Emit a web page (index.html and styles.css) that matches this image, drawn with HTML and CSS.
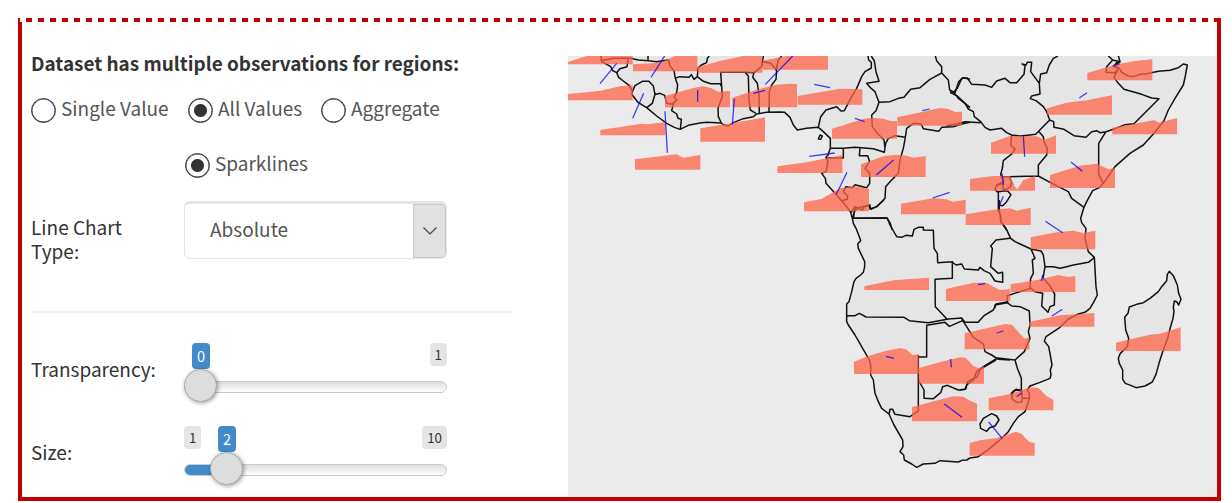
FILE: index.html
```html
<!DOCTYPE html>
<html lang="en">
<head>
<meta charset="utf-8">
<title>Map settings</title>
<link rel="stylesheet" href="styles.css">
</head>
<body>
<main class="frame">
  <div class="frame-top"></div>
  <div class="frame-body">
    <section class="controls">
      <h1 class="title">Dataset has multiple observations for regions:</h1>
      <div class="radios">
        <label class="radio single"><span class="dot"></span><span class="name">Single Value</span></label>
        <label class="radio all"><span class="dot on"></span><span class="name">All Values</span></label>
        <label class="radio agg"><span class="dot"></span><span class="name">Aggregate</span></label>
      </div>
      <div class="radios second">
        <label class="radio"><span class="dot on"></span><span class="name">Sparklines</span></label>
      </div>
      <div class="row select-row">
        <div class="label">Line Chart<br>Type:</div>
        <div class="select"><span class="value">Absolute</span><span class="arrow"><svg width="16" height="10" viewBox="0 0 16 10"><path d="M1.5 1.5 8 8l6.500-6.500" fill="none" stroke="#444" stroke-width="1.200"/></svg></span></div>
      </div>
      <hr class="rule">
      <div class="row slider-row">
        <div class="label">Transparency:</div>
        <div class="slider zero"><div class="track"><div class="fill"></div></div><span class="tag max">1</span><span class="tag current">0</span><span class="knob"></span></div>
      </div>
      <div class="row slider-row size">
        <div class="label">Size:</div>
        <div class="slider two"><div class="track"><div class="fill"></div></div><span class="tag min">1</span><span class="tag max">10</span><span class="tag current">2</span><span class="knob"></span></div>
      </div>
    </section>
    <svg class="map" viewBox="24 48 1947 1323" preserveAspectRatio="none">
      <g class="land">
        <path d="M122 40 125 65 140 73 152 80 158 92 170 98 176 112 190 123 208 137 217 155 215 163 235 188 260 203 290 228 320 250 343 262 360 268 385 256 420 249 440 247 484 249 492 255 505 258 520 248 550 236 580 230 590 222 620 217 660 216 674 217 690 232 700 255 712 270 740 265 775 262 790 275 811 295 811 325 804 345 798 352 804 365 798 395 785 400 796 415 798 430 810 443 830 465 860 500 872 517 877 535 880 550 888 565 898 590 902 602 893 612 895 625 914 665 914 680 910 697 902 705 888 715 882 725 875 755 867 785 860 792 860 845 865 855 885 885 905 920 928 960 932 975 932 1005 940 1020 945 1060 955 1085 965 1105 987 1122 1002 1155 1028 1200 1029 1220 1020 1235 1031 1245 1033 1260 1055 1272 1070 1282 1090 1272 1125 1270 1140 1262 1195 1266 1206 1261 1220 1260 1230 1254 1255 1250 1290 1225 1325 1195 1345 1175 1360 1150 1375 1130 1395 1115 1402 1095 1408 1075 1408 1060 1402 1050 1410 1038 1440 1027 1470 1015 1473 1005 1471 990 1476 975 1470 940 1466 920 1453 903 1458 890 1500 862 1525 837 1555 822 1575 817 1590 805 1602 785 1612 765 1608 740 1603 652 1585 635 1575 595 1578 565 1565 548 1562 535 1572 502 1580 485 1598 452 1618 443 1630 430 1665 380 1710 340 1750 315 1782 280 1812 242 1825 210 1845 175 1870 135 1876 108 1882 75 1870 72 1855 83 1830 91 1795 94 1760 101 1740 103 1720 110 1705 108 1685 97 1678 85 1660 80 1670 68 1680 65 1673 40Z"/>
        <path d="M1828 694 1822 703 1820 722 1805 740 1795 755 1770 775 1750 788 1730 793 1708 801 1704 820 1694 832 1697 870 1706 895 1702 920 1681 940 1675 955 1678 970 1688 990 1688 1018 1696 1030 1712 1036 1728 1043 1755 1038 1777 1026 1788 1003 1797 970 1808 935 1823 895 1829 870 1839 835 1842 815 1840 802 1843 783 1850 785 1856 795 1863 778 1856 760 1852 735 1840 707Z"/>
      </g>
      <g class="borders">
        <path d="M122 62 160 55 205 55 201 80 180 86 170 98M208 54 235 60 264 62 264 48M264 62 290 65 326 60 330 78 342 92 346 115 353 135 350 158 342 172 350 180 337 193 320 190 314 166 300 160 283 164M217 155 225 137 247 124 267 124 280 138 285 163 277 190 260 203M346 115 358 110 387 112 394 104 402 118 412 110 414 84 424 75 440 68 442 55 448 48M412 110 430 124 452 131 480 131 485 140 487 170 474 205 475 230 484 249M342 185 335 212 350 222 354 235 364 238 361 268M485 140 482 97 555 97 565 108 567 180 571 210 588 220M555 97 582 98 578 112 592 130 597 165 598 220M582 98 605 80 610 48M610 65 632 70 650 90 648 118 635 135 628 155 627 216M648 93 655 60 665 48"/>
        <g transform="translate(540)">
          <path d="M235 262 242 230 258 210 290 200 303 213 313 212 335 170 350 145 365 110 375 95 394 84 394 67 386 60 384 48M394 48 403 63 408 95 417 124 380 130 390 142 405 155 417 187 450 185 475 175 492 172 512 148 540 143 570 118 605 99 605 80 590 62 586 48M605 99 625 120 629 150 645 158 656 125 670 113 690 118M640 155 655 175 675 190 690 203M417 187 408 212 395 225 397 260 412 280 432 300 435 325M271 325 310 325 345 322 400 326 433 337 437 310 445 295 465 287 496 292M262 354 310 354 310 325M360 325 358 347 383 347 389 365 375 385 389 400 389 430 380 443 345 434 337 443 318 440 310 455 323 468 322 478 305 482M496 292 500 265 520 250 543 252 550 266 596 274 605 262 640 260 665 252 690 247M496 292 490 325 480 360 475 400 450 425 437 440 435 475 410 500 393 508 386 496 373 500 368 510 345 500 333 518M340 537 345 503M337 535 440 534 450 548 457 570M235 297 240 285 247 288 242 298Z"/>
        </g>
        <g transform="translate(1170)">
          <path d="M0 157 12 155 22 145 35 115 52 114 65 133 105 135 125 142 140 123 165 115 180 128 200 128 222 103 225 78 216 72 228 75 232 67 245 67 242 95 268 130 272 102 290 98 298 75 310 55 324 48M268 130 270 162 245 168 241 176 258 182 280 200 290 215 299 240 311 245 312 262 342 268 372 287 408 292 425 275 440 272 450 278 468 275 490 268 525 254 552 251 627 176 605 174 575 163 522 148 505 130 492 112 505 85 495 75 510 65M470 80 468 97 495 98 505 85M475 48 488 60 470 80M488 60 510 65M0 157 22 168 45 190 55 207 70 215 73 230 92 245 105 262 120 270 155 265 170 278 185 285 210 288 240 285 257 283 299 240M-10 258 20 252 45 245 92 248M185 285 182 315 195 328 185 342 160 362 157 385 152 403 160 425 140 435 135 448 142 456 160 453M152 410 178 410 265 408 265 375 290 345 292 325 282 305 280 290 267 275M265 408 300 427 355 455 365 475 402 502M468 275 446 310 446 403 460 430M178 410 185 430 180 443 160 450 158 430 140 437M160 453 173 453 183 464 170 485 158 497 145 495 145 455M145 495 145 512 152 525 152 545 170 570"/>
        </g>
        <g transform="translate(660 480)">
          <path d="M217 55 322 54 330 75 350 110 365 112 378 106 397 108 402 88 415 82 430 82 430 90 460 91 462 145 472 160 473 188 515 185 528 195 545 192 553 207 595 210 600 202 612 212 630 220 645 243 668 247 668 217 655 220 632 200 637 145 632 138 648 120 690 115M517 183 517 235 465 238 466 320 500 356M200 347 225 347 238 340 258 351 372 352 388 362 445 368 505 357 545 354 555 367 594 367 612 347 640 330 648 312 685 305M545 354 548 362 508 379 495 367 440 376 440 471 415 471M548 362 560 380 580 412 610 432 615 455 635 465 655 478 690 480M217 55 225 30 240 22 270 15 270 27 290 20 312 0"/>
        </g>
        <g transform="translate(1200 480)">
          <path d="M118 0 118 30 123 65 138 85 152 115 165 125 213 147 225 175 217 180 220 220 212 235 210 265M213 147 243 153 250 165 255 200 249 235 268 255 284 282 283 315 270 320 264 337 245 318 248 280 225 275 212 265M255 200 280 200 300 205 320 200 340 195 385 187 403 173M105 325 105 315 142 308 142 287 212 265M142 308 155 318 180 320 208 333 210 375 205 395 210 415 193 455 165 480 113 474 70 500 50 515 40 540 20 555 15 568 0 570M165 480 172 505 184 535 184 575 176 569 160 573 155 590"/>
        </g>
        <g transform="translate(780 870)">
          <path d="M295 75 295 243 270 260 225 253 218 238 210 238 207 252M295 150 312 180 312 205 340 206 362 188 368 170 382 166 415 180 437 178 443 155 472 140 480 118 528 90M605 182 588 178 574 190 576 207 590 217 605 216 607 205 629 205M607 205 605 182M480 282 490 265 515 251 530 258 537 270 525 288 509 293 500 304 482 295Z"/>
        </g>
      </g>
      <g class="areas">
        <path d="M24 66 80 48H218V73H24ZM219 73 300 68 345 48H412V94H219ZM413 81 480 63 550 48H607V98H413ZM608 62 680 48H804V89H608ZM24 162 118 153 180 139 218 136V181H24ZM121 270 245 251 260 253 316 247V286H121ZM315 168 400 144 430 139 455 145 475 155 510 153V202H315ZM421 265 530 247 615 232V305H421ZM517 173 600 146 650 134 690 131 711 132V202H517ZM225 358 350 343 370 353 421 345V389H225Z"/>
        <path transform="translate(540)" d="M173 168 300 146 367 148V194H173ZM276 266 370 237 395 233 430 236 455 244 471 243V296H276ZM472 232 560 213 600 204 625 207 645 216 666 215V257H472ZM112 379 200 367 307 345V399H112ZM363 373 430 349 470 344 500 347 522 353 557 348V411H363ZM192 487 245 477 300 445 345 439 387 447V514H192ZM483 491 580 475 618 478 640 485 677 479V523H483Z"/>
        <path transform="translate(1170)" d="M412 99 500 73 560 62 607 58V121H412ZM291 205 350 188 410 181 486 166V224H291ZM487 263 600 243 612 240 627 248 681 234V283H487ZM123 308 180 288 260 289 285 299 318 286V341H123ZM300 405 390 377 440 371 475 388 495 385V444H300ZM60 417 130 408 180 408 195 440 202 448 220 420 255 408V452H60ZM47 523 130 509 180 505 200 512 242 503V555H47Z"/>
        <path transform="translate(660 480)" d="M253 259 340 241 447 233V270H253ZM498 267 580 248 620 248 640 260 660 270 691 268V303H498Z"/>
        <path transform="translate(1200 480)" d="M212 112 290 97 340 92 370 99 406 92V148H212ZM152 253 230 240 295 225 325 231 346 228V276H152ZM208 366 300 346 403 339V380H208ZM14 400 80 385 135 372 156 374 180 402 195 416 208 412V448H14ZM468 428 570 404 600 401 662 382V453H468Z"/>
        <path transform="translate(780 870)" d="M102 95 145 78 200 62 240 54 258 58 278 75 296 73V132H102ZM296 114 370 94 420 82 437 83 460 108 475 114 492 109V161H296ZM276 232 330 217 400 199 430 200 450 212 471 221V274H276ZM506 205 570 192 630 172 655 174 680 199 700 209V241H506ZM449 339 480 331 530 324 588 305 605 312 628 336 644 339V377H449Z"/>
      </g>
      <g class="links">
        <path d="M170 70 120 131M314 48 273 112M251 160 218 235M413 150V185M315 214 322 338M523 177 517 254M698 48 616 133M580 160 615 151"/>
        <path transform="translate(540)" d="M223 133 270 143M345 235 374 245M547 212 569 207M208 349 284 339M461 360 409 405M321 397 289 463M578 474 629 457"/>
        <path transform="translate(1170)" d="M488 78 509 71M388 174 411 158M220 289 224 350M363 366 397 394M156 400 161 434M160 469 145 504M286 544 338 578"/>
        <path transform="translate(1200 480)" d="M54 254 75 251M248 225 244 243M307 328 275 349M110 399 130 393"/>
        <path transform="translate(780 870)" d="M198 79 222 85M392 87 394 112M373 222 426 262M506 276 547 326M590 200 605 189"/>
      </g>
    </svg>
  </div>
</main>
</body>
</html>
```

FILE: styles.css
```css
* { box-sizing: border-box; }
body { margin: 0; background: #fff; color: #333; font-family: "Noto Sans CJK SC", "Noto Sans", sans-serif; overflow: hidden; }
.frame { width: 1203px; height: 483px; margin: 18px 0 0 18px; }
.frame-top { height: 4px; background: repeating-linear-gradient(90deg, #c20000 0 6px, transparent 6px 12px) 8px 0 / 1191px 4px no-repeat, linear-gradient(#c20000, #c20000) 0 0 / 2px 4px no-repeat, linear-gradient(#c20000, #c20000) 100% 0 / 4px 4px no-repeat; }
.frame-body { display: flex; height: 479px; border: solid #c20000; border-width: 0 4px 4px; }
.controls { width: 546px; padding: 27px 0 0 9px; font-size: 19px; line-height: 24px; }
.title { margin: 0; font-size: 18.950px; line-height: 28px; font-weight: 700; white-space: nowrap; }
.radios { display: flex; height: 26px; margin-top: 19px; color: #555; white-space: nowrap; }
.radio { display: flex; gap: 6px; }
.single { width: 157px; }
.all { width: 133px; }
.second { margin: 29px 0 0 154px; }
.dot { width: 25px; height: 25px; margin: 2px -1px 0 0; flex: none; border: 1.500px solid #333; border-radius: 50%; box-shadow: inset 0 0 0 .5px #333; }
.dot.on { background: radial-gradient(circle, #333 6px, transparent 7px); }
.row { display: flex; }
.label { width: 153px; flex: none; white-space: nowrap; }
.select-row { height: 58px; margin-top: 24px; }
.select-row .label { padding-top: 14px; }
.select { display: flex; width: 263px; height: 58px; border: 1px solid #e5e5e5; border-top-width: 3px; border-radius: 6px; background: #fff; color: #555; overflow: hidden; }
.value { flex: 1; padding: 13px 0 0 25px; }
.arrow { display: flex; width: 33px; align-items: center; justify-content: center; background: #e1e1e1; border: 1px solid #c6c6c6; border-radius: 0 4px 4px 0; }
.rule { width: 481px; height: 2px; margin: 52px 0 0; border: 0; background: #f2f2f2; }
.slider-row { height: 60px; margin-top: 30px; }
.slider-row.size { margin-top: 23px; }
.slider-row .label { padding-top: 14px; }
.slider { position: relative; width: 263px; padding-top: 38px; }
.track { height: 12px; overflow: hidden; border: 1px solid #ccc; border-radius: 7px; background: linear-gradient(#dedede, #fff); }
.fill { height: 12px; margin: -1px; background: #428bca; }
.zero .fill { width: 17px; }
.two .fill { width: 43px; }
.tag { position: absolute; top: 0; height: 23px; padding: 0 5px; border-radius: 4px; background: #e5e5e5; color: #333; font-size: 13.300px; line-height: 23px; }
.max { right: 0; }
.min { left: 0; }
.current { height: 26px; background: #428bca; color: #fff; font-size: 14.500px; line-height: 26px; }
.zero .current { left: 8px; }
.two .current { left: 34px; }
.knob { position: absolute; top: 26px; width: 33px; height: 33px; border: 1px solid #aaa; border-radius: 50%; background: #ddd; box-shadow: 1px 1px 4px rgba(0, 0, 0, .4); }
.zero .knob { left: 0; }
.two .knob { left: 26px; }
.map { width: 649px; height: 441px; margin-top: 34px; flex: none; background: #ebebeb; }
.land path { fill: #e5e5e5; stroke: #111; stroke-width: 4.500; stroke-linejoin: round; }
.borders path { fill: none; stroke: #111; stroke-width: 4.500; stroke-linejoin: round; }
.areas path { fill: #ff6347; fill-opacity: .75; }
.links path { fill: none; stroke: #00f; stroke-opacity: .75; stroke-width: 3.800; }
```
